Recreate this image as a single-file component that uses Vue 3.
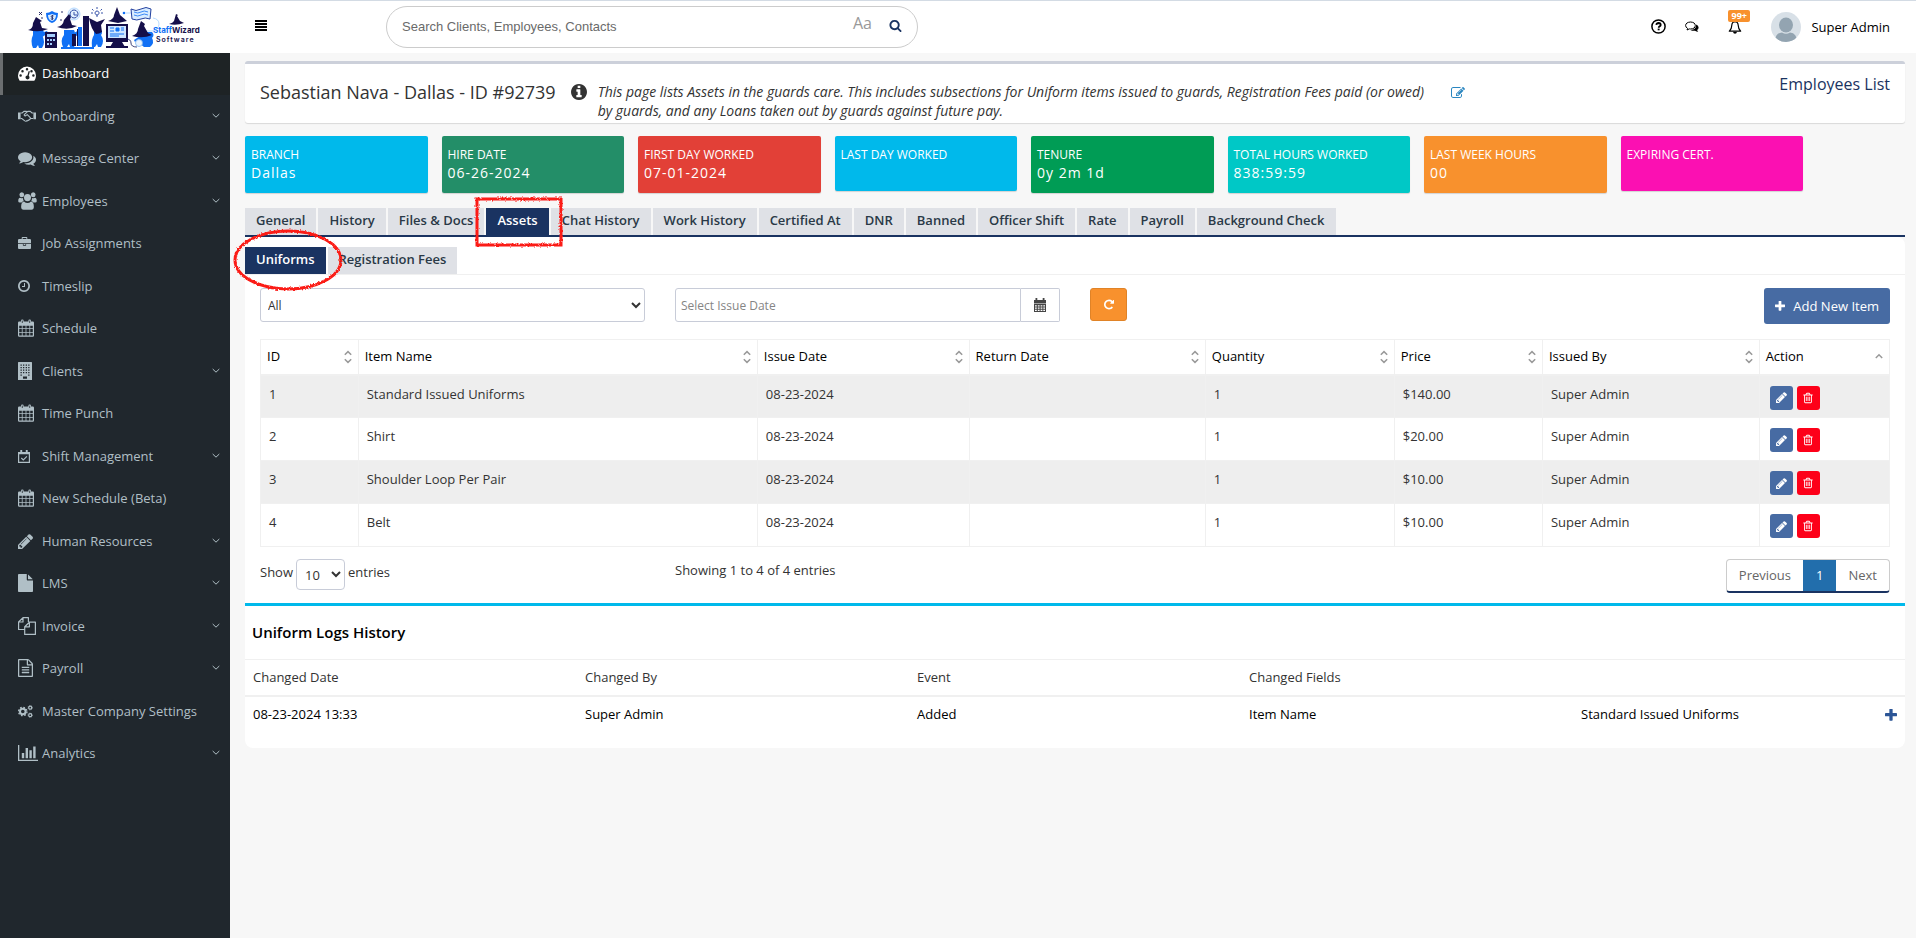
<script setup>
import { ref } from 'vue'

const icons = {
  bars: { vb: '0 0 12 11', b: '<path d="M0 0h12v2H0zM0 3h12v2H0zM0 6h12v2H0zM0 9h12v2H0z"/>' },
  search: { vb: '0 0 1792 1792', b: '<path d="M1216 832q0-185-131.5-316.5t-316.5-131.5-316.5 131.5-131.5 316.5 131.5 316.5 316.5 131.5 316.5-131.5 131.5-316.5zm512 832q0 52-38 90t-90 38q-54 0-90-38l-343-342q-179 124-399 124-143 0-273.5-55.5t-225-150-150-225-55.5-273.5 55.5-273.5 150-225 225-150 273.5-55.5 273.5 55.5 225 150 150 225 55.5 273.5q0 220-124 399l343 343q37 37 37 90z"/>' },
  plus: { vb: '192 160 1408 1408', b: '<path d="M1600 736v192q0 40-28 68t-68 28h-416v416q0 40-28 68t-68 28h-192q-40 0-68-28t-28-68v-416h-416q-40 0-68-28t-28-68v-192q0-40 28-68t68-28h416v-416q0-40 28-68t68-28h192q40 0 68 28t28 68v416h416q40 0 68 28t28 68z"/>' },
  trash: { vb: '0 0 1792 1792', b: '<path d="M704 736v576q0 14-9 23t-23 9h-64q-14 0-23-9t-9-23v-576q0-14 9-23t23-9h64q14 0 23 9t9 23zm256 0v576q0 14-9 23t-23 9h-64q-14 0-23-9t-9-23v-576q0-14 9-23t23-9h64q14 0 23 9t9 23zm256 0v576q0 14-9 23t-23 9h-64q-14 0-23-9t-9-23v-576q0-14 9-23t23-9h64q14 0 23 9t9 23zm128 724v-948h-896v948q0 22 7 40.5t14.5 27 10.5 8.5h832q3 0 10.5-8.5t14.5-27 7-40.5zm-672-1076h448l-48-117q-7-9-17-11h-317q-10 2-17 11zm928 32v64q0 14-9 23t-23 9h-96v948q0 83-47 143.5t-113 60.5h-832q-66 0-113-58.5t-47-141.5v-952h-96q-14 0-23-9t-9-23v-64q0-14 9-23t23-9h309l70-167q15-37 54-63t79-26h320q40 0 79 26t54 63l70 167h309q14 0 23 9t9 23z"/>' },
  pencil: { vb: '128 128 1520 1536', b: '<path d="M491 1536l91-91-235-235-91 91v107h128v128h107zm523-928q0-22-22-22-10 0-17 7l-542 542q-7 7-7 17 0 22 22 22 10 0 17-7l542-542q7-7 7-17zm-54-192l416 416-832 832h-416v-416zm683 96q0 53-37 90l-166 166-416-416 166-165q36-38 90-38 53 0 91 38l235 234q37 39 37 91z"/>' },
  briefcase: { vb: '0 0 1792 1536', b: '<path d="M640 256h512v-128h-512v128zm1152 640v480q0 66-47 113t-113 47h-1472q-66 0-113-47t-47-113v-480h672v160q0 26 19 45t45 19h320q26 0 45-19t19-45v-160h672zm-768 0v128h-256v-128h256zm768-480v384h-1792v-384q0-66 47-113t113-47h352v-160q0-40 28-68t68-28h576q40 0 68 28t28 68v160h352q66 0 113 47t47 113z"/>' },
  file: { vb: '128 0 1536 1792', b: '<path d="M1152 512v-472q22 14 36 28l408 408q14 14 28 36h-472zm-128 32q0 40 28 68t68 28h544v1056q0 40-28 68t-68 28h-1344q-40 0-68-28t-28-68v-1600q0-40 28-68t68-28h800v544z"/>' },
  fileText: { vb: '128 0 1536 1792', b: '<path d="M1596 380q28 28 48 76t20 88v1152q0 40-28 68t-68 28h-1344q-40 0-68-28t-28-68v-1600q0-40 28-68t68-28h896q40 0 88 20t76 48zm-444-244v376h376q-10-29-22-41l-313-313q-12-12-41-22zm384 1528v-1024h-416q-40 0-68-28t-28-68v-416h-768v1536h1280zm-1024-864q0-14 9-23t23-9h704q14 0 23 9t9 23v64q0 14-9 23t-23 9h-704q-14 0-23-9t-9-23v-64zm736 224q14 0 23 9t9 23v64q0 14-9 23t-23 9h-704q-14 0-23-9t-9-23v-64q0-14 9-23t23-9h704zm0 256q14 0 23 9t9 23v64q0 14-9 23t-23 9h-704q-14 0-23-9t-9-23v-64q0-14 9-23t23-9h704z"/>' },
  clock: { vb: '128 128 1536 1536', b: '<path d="M1024 544v448q0 14-9 23t-23 9h-320q-14 0-23-9t-9-23v-64q0-14 9-23t23-9h224v-352q0-14 9-23t23-9h64q14 0 23 9t9 23zm416 352q0-148-73-273t-198-198-273-73-273 73-198 198-73 273 73 273 198 198 273 73 273-73 198-198 73-273zm224 0q0 209-103 385.5t-279.5 279.5-385.5 103-385.5-103-279.5-279.5-103-385.5 103-385.5 279.5-279.5 385.5-103 385.5 103 279.5 279.5 103 385.5z"/>' },
  info: { vb: '128 128 1536 1536', b: '<path d="M1152 1376v-160q0-14-9-23t-23-9h-96v-512q0-14-9-23t-23-9h-320q-14 0-23 9t-9 23v160q0 14 9 23t23 9h96v320h-96q-14 0-23 9t-9 23v160q0 14 9 23t23 9h448q14 0 23-9t9-23zm-128-896v-160q0-14-9-23t-23-9h-192q-14 0-23 9t-9 23v160q0 14 9 23t23 9h192q14 0 23-9t9-23zm640 416q0 209-103 385.5t-279.5 279.5-385.5 103-385.5-103-279.5-279.5-103-385.5 103-385.5 279.5-279.5 385.5-103 385.5 103 279.5 279.5 103 385.5z"/>' },
  repeat: { vb: '128 128 1536 1536', b: '<path d="M1664 256v448q0 26-19 45t-45 19h-448q-42 0-59-40-17-39 14-69l138-138q-148-137-349-137-104 0-198.5 40.5t-163.5 109.5-109.5 163.5-40.5 198.5 40.5 198.5 109.5 163.5 163.5 109.5 198.5 40.5q119 0 225-52t179-147q7-10 23-12 15 0 25 9l137 138q9 8 9.5 20.5t-7.5 22.5q-109 132-264 204.5t-327 72.5q-156 0-298-61t-245-164-164-245-61-298 61-298 164-245 245-164 298-61q147 0 284.5 55.5t244.5 156.5l130-129q29-31 70-14 39 17 39 59z"/>' },
  comments: { vb: '0 128 1792 1536', b: '<path d="M1408 768q0 139-94 257t-256.5 186.5-353.5 68.5q-86 0-176-16-124 88-278 128-36 9-86 16h-3q-11 0-20.5-8t-11.5-21q-1-3-1-6.5t.5-6.5 2-6l2.5-5 3.5-5.5 4-5 4.5-5 4-4.5q5-6 23-25t26-29.5 22.5-29 25-38.5 20.5-44q-124-72-195-177t-71-224q0-139 94-257t256.5-186.5 353.5-68.5 353.5 68.5 256.5 186.5 94 257zm384 256q0 120-71 224.5t-195 176.5q10 24 20.5 44t25 38.5 22.5 29 26 29.5 23 25q1 1 4 4.5t4.5 5 4 5 3.5 5.5l2.5 5 2 6 .5 6.5-1 6.5q-3 14-13 22t-22 7q-50-7-86-16-154-40-278-128-90 16-176 16-271 0-472-132 58 4 88 4 161 0 309-45t264-129q125-92 192-212t67-254q0-77-23-152 129 71 204 178t75 230z"/>' },
  edit: { vb: '0 128 1792 1408', b: '<path d="M888 1184l116-116-152-152-116 116v56h96v96h56zm440-720q-16-16-33 1l-350 350q-17 17-1 33t33-1l350-350q17-17 1-33zm80 594v190q0 119-84.5 203.5t-203.5 84.5h-832q-119 0-203.5-84.5t-84.5-203.5v-832q0-119 84.5-203.5t203.5-84.5h832q63 0 117 25 15 7 18 23 3 17-9 29l-49 49q-14 14-32 8-23-6-45-6h-832q-66 0-113 47t-47 113v832q0 66 47 113t113 47h832q66 0 113-47t47-113v-126q0-13 9-22l64-64q15-15 35-7t20 29zm-96-738l288 288-672 672h-288v-288zm444 132l-92 92-288-288 92-92q28-28 68-28t68 28l152 152q28 28 28 68t-28 68z"/>' },
  tachometer: { vb: '0 0 18 15', b: '<path fill-rule="evenodd" d="M9 0.5A9 9 0 0 1 18 9.5c0 1.8-.5 3.4-1.4 4.8q-.2.5-.8.5H2.200q-.6 0-.8-.5A8.700 8.700 0 0 1 0 9.500 9 9 0 0 1 9 .5zM2.600 8.300a1.200 1.200 0 1 0 0 2.500 1.200 1.200 0 0 0 0-2.500zM4.500 4a1.200 1.200 0 1 0 0 2.500 1.200 1.200 0 0 0 0-2.500zM9 2.100a1.200 1.200 0 1 0 0 2.500 1.200 1.200 0 0 0 0-2.500zM13.500 4a1.200 1.200 0 1 0 0 2.500 1.200 1.200 0 0 0 0-2.500zM15.400 8.300a1.200 1.200 0 1 0 0 2.500 1.200 1.200 0 0 0 0-2.500zM10.500 5.500L9.400 9.400a2 2 0 1 0 1.300.4l1-3.900q.1-.6-.5-.8t-.7.400z"/>' },
  handshake: { vb: '0 0 18 12', b: '<path d="M0 2.500h2.600v6.800H0zM15.400 2.500H18v6.800h-2.600z"/><path d="M2.600 3h1.600L6 1.400h2.300L9 2l.9-.6h2.300L14 3h1.400M2.600 8.500h1.200l3 2.400q1 .7 1.700-.1 1 .4 1.500-.5 1.200.2 1.400-.9 1 .1 1.200-.9h2.600M9.200 1.900L6.300 4.500q-.3 1.300 1 1.400l2-1.300 3.400 3.500" fill="none" stroke="currentColor" stroke-width="1.100"/>' },
  users: { vb: '0 0 20 18', b: '<circle cx="4" cy="2.800" r="2.500"/><circle cx="16" cy="2.800" r="2.500"/><circle cx="10" cy="5.600" r="3.700"/><path d="M5.300 6.100Q4.200 6.300 3 6Q1.500 5.600 1 6.300Q0 7.500.3 9.500q.2 1 1.500 1h2q1-1.200 2.200-1.500-.9-1.400-.7-2.900zM14.700 6.100q1.100.2 2.300-.1 1.500-.4 2 .3 1 1.200.7 3.200-.2 1-1.500 1h-2q-1-1.200-2.200-1.500.9-1.400.7-2.900zM6.300 9.500Q10 12.500 13.700 9.500q2.900.3 3 5.300 0 3-2.600 3H5.900q-2.600 0-2.600-3 .1-5 3-5.300z"/>' },
  calendar: { vb: '0 0 16 18', b: '<path fill-rule="evenodd" d="M1.200 2.600h13.600q1.200 0 1.200 1.200v12.800q0 1.200-1.200 1.200H1.200Q0 17.800 0 16.600V3.800Q0 2.600 1.200 2.600zM1.200 6.800v2.500h2.600V6.800zM4.600 6.800v2.500h3V6.800zM8.400 6.800v2.500h3V6.800zM12.200 6.800v2.500h2.600V6.800zM1.200 10.100v2.800h2.600v-2.800zM4.600 10.100v2.800h3v-2.800zM8.400 10.100v2.800h3v-2.800zM12.200 10.100v2.800h2.600v-2.800zM1.200 13.700v2.900h2.600v-2.900zM4.600 13.700v2.900h3v-2.900zM8.400 13.700v2.900h3v-2.900zM12.200 13.700v2.900h2.600v-2.900z"/><rect x="3" y=".5" width="2.600" height="4.500" rx="1.200"/><rect x="10.400" y=".5" width="2.600" height="4.500" rx="1.200"/><path d="M4.300 1.600v2.400M11.700 1.600v2.400" stroke="#20272d" stroke-width=".8"/>' },
  calendarDark: { vb: '0 0 12 14', b: '<path fill-rule="evenodd" d="M0 2h12v3H0zM0 5.500h12V14H0zM1 7.200v1.300h1.800V7.200zM3.800 7.200v1.300h1.800V7.200zM6.600 7.200v1.300h1.800V7.200zM9.300 7.200v1.300H11V7.200zM1 9.500v1.300h1.800V9.500zM3.800 9.500v1.300h1.800V9.500zM6.600 9.500v1.300h1.800V9.500zM9.300 9.500v1.300H11V9.500zM1 11.700v1.300h1.800v-1.300zM3.800 11.700v1.300h1.800v-1.300zM6.600 11.700v1.300h1.800v-1.300zM9.300 11.700v1.300H11v-1.300z"/><path d="M1.500 0h1.800v3H1.500zM8.700 0h1.800v3H8.700z"/>' },
  building: { vb: '0 0 14 18', b: '<path fill-rule="evenodd" d="M.6 0h12.800q.6 0 .6.600V18H0V.6Q0 0 .6 0zM2.500 2.500v1.200h1.300V2.500zM5 2.500v1.200h1.300V2.500zM7.700 2.500v1.200H9V2.500zM10.200 2.500v1.200h1.300V2.500zM2.500 5v1.200h1.300V5zM5 5v1.200h1.300V5zM7.700 5v1.200H9V5zM10.200 5v1.200h1.300V5zM2.500 7.500v1.200h1.300V7.500zM5 7.500v1.200h1.300V7.500zM7.700 7.500v1.200H9V7.500zM10.200 7.500v1.200h1.300V7.500zM2.500 10v1.200h1.300V10zM5 10v1.200h1.300V10zM7.700 10v1.200H9V10zM10.200 10v1.200h1.300V10zM2.500 12.500v1.200h1.300v-1.200zM10.200 12.500v1.200h1.300v-1.200zM5 14.500v2.300h4v-2.300z"/>' },
  calendarCheck: { vb: '0 0 12 13', b: '<path d="M.6 2.500h10.800v9.900H.6z" fill="none" stroke="currentColor" stroke-width="1.200"/><path d="M.6 2.200h10.800v2.100H.6zM2.300 0h1.900v3.300H2.300zM7.800 0h1.900v3.300H7.800z"/><path d="M3.300 8l2 2 3.600-3.600" fill="none" stroke="currentColor" stroke-width="1.100"/>' },
  copy: { vb: '0 0 18 18', b: '<path d="M6.500 12.500H.6V5L5 .6h5.400v4.500M5 .6V5H.6M6.700 9.800L11.400 5.200h6v12.200H6.700zM11.400 5.200v4.600H6.700" fill="none" stroke="currentColor" stroke-width="1.200" stroke-linejoin="round"/>' },
  cogs: { vb: '0 0 15 13', b: '<g fill="none" stroke="currentColor"><circle cx="4.800" cy="6.500" r="2.800" stroke-width="2"/><circle cx="4.800" cy="6.500" r="4.200" stroke-width="1.300" stroke-dasharray="1.700 1.600"/><circle cx="12.200" cy="2.700" r="1.500" stroke-width="1.200"/><circle cx="12.200" cy="2.700" r="2.200" stroke-width=".7" stroke-dasharray=".9 .8"/><circle cx="12.200" cy="10.200" r="1.500" stroke-width="1.200"/><circle cx="12.200" cy="10.200" r="2.200" stroke-width=".7" stroke-dasharray=".9 .8"/></g>' },
  chart: { vb: '0 0 20 16', b: '<path d="M0 0h1.300v14.700H20V16H0zM3.800 8h2.400v5.300H3.800zM7.600 3h2.400v10.300H7.600zM11.400 5.200h2.400v8.100h-2.400zM15.200 1.600h2.400v11.700h-2.400z"/>' },
  chevron: { vb: '0 0 8 6', b: '<path d="M.7 1l3.300 3.200L7.300 1" fill="none" stroke="currentColor" stroke-width="1"/>' },
  help: { vb: '0 0 15 15', b: '<circle cx="7.500" cy="7.500" r="6.600" fill="none" stroke="currentColor" stroke-width="1.500"/><path d="M5.300 5.900Q5.600 4 7.600 4q2.100.1 2.100 1.900 0 .9-1.100 1.500-.9.500-.9 1.300" fill="none" stroke="currentColor" stroke-width="1.800"/><path d="M6.700 9.600h1.900v1.700H6.700z"/>' },
  commentsO: { vb: '0 0 14 12', b: '<path d="M5.500 1q4.700.3 4.800 3.500-.1 3.300-4.800 3.500l-1.200-.1L2 9l.6-1.600Q.6 6.400.6 4.500.8 1.300 5.500 1z" fill="none" stroke="currentColor" stroke-width="1"/><path d="M11.200 3.500q2.300 1 2.400 2.900 0 1.700-1.500 2.700.4 1 1.200 1.700-2-.1-3.300-1.100-2.700.3-4.500-.8 5.700.2 5.700-5.400z"/>' },
  bell: { vb: '0 0 14 14', b: '<path d="M7 1.600q3 .2 3.200 3.600.1 3.900 2.500 6H1.300q2.400-2.100 2.500-6Q4 1.800 7 1.600z" fill="none" stroke="currentColor" stroke-width="1.200" stroke-linejoin="round"/><path d="M6.300 0h1.400v2H6.300zM5 11.800h4q-.3 2-2 2t-2-2z"/>' }
}

const menu = [
  { label: 'Dashboard', icon: 'tachometer', w: 18, h: 15, active: true },
  { label: 'Onboarding', icon: 'handshake', w: 18, h: 12, sub: true },
  { label: 'Message Center', icon: 'comments', w: 18, h: 15, sub: true },
  { label: 'Employees', icon: 'users', w: 19, h: 18, sub: true },
  { label: 'Job Assignments', icon: 'briefcase', w: 13, h: 12 },
  { label: 'Timeslip', icon: 'clock', w: 12, h: 12 },
  { label: 'Schedule', icon: 'calendar', w: 16, h: 18 },
  { label: 'Clients', icon: 'building', w: 14, h: 18, sub: true },
  { label: 'Time Punch', icon: 'calendar', w: 16, h: 18 },
  { label: 'Shift Management', icon: 'calendarCheck', w: 12, h: 13, sub: true },
  { label: 'New Schedule (Beta)', icon: 'calendar', w: 16, h: 18 },
  { label: 'Human Resources', icon: 'pencil', w: 15, h: 15, sub: true },
  { label: 'LMS', icon: 'file', w: 15, h: 18, sub: true },
  { label: 'Invoice', icon: 'copy', w: 18, h: 18, sub: true },
  { label: 'Payroll', icon: 'fileText', w: 15, h: 18, sub: true },
  { label: 'Master Company Settings', icon: 'cogs', w: 15, h: 13 },
  { label: 'Analytics', icon: 'chart', w: 20, h: 16, sub: true }
]

const stats = [
  { label: 'BRANCH', value: 'Dallas', tone: 'cyan' },
  { label: 'HIRE DATE', value: '06-26-2024', tone: 'forest' },
  { label: 'FIRST DAY WORKED', value: '07-01-2024', tone: 'red' },
  { label: 'LAST DAY WORKED', value: '', tone: 'cyan' },
  { label: 'TENURE', value: '0y 2m 1d', tone: 'green' },
  { label: 'TOTAL HOURS WORKED', value: '838:59:59', tone: 'teal' },
  { label: 'LAST WEEK HOURS', value: '00', tone: 'orange' },
  { label: 'EXPIRING CERT.', value: '', tone: 'pink' }
]

const tabs = ['General', 'History', 'Files & Docs', 'Assets', 'Chat History', 'Work History', 'Certified At', 'DNR', 'Banned', 'Officer Shift', 'Rate', 'Payroll', 'Background Check']
const subTabs = ['Uniforms', 'Registration Fees']
const columns = ['ID', 'Item Name', 'Issue Date', 'Return Date', 'Quantity', 'Price', 'Issued By', 'Action']
const items = [
  ['1', 'Standard Issued Uniforms', '08-23-2024', '', '1', '$140.00', 'Super Admin'],
  ['2', 'Shirt', '08-23-2024', '', '1', '$20.00', 'Super Admin'],
  ['3', 'Shoulder Loop Per Pair', '08-23-2024', '', '1', '$10.00', 'Super Admin'],
  ['4', 'Belt', '08-23-2024', '', '1', '$10.00', 'Super Admin']
]

const activeTab = ref('Assets')
const activeSub = ref('Uniforms')
</script>

<template>
  <div class="page">
    <header class="topbar">
      <a class="brand" href="#" aria-label="StaffWizard Software">
        <svg width="180" height="44" viewBox="0 0 180 44">
          <g fill="none" stroke="#b8dcff" stroke-width="1">
            <path d="M101 7h8M128 12q6 1 6 6t-7 7h-10" />
            <circle cx="49" cy="8" r="6" fill="#e3f1ff" />
          </g>
          <g id="wizards">
            <g fill="#1170f5">
              <path d="M8 24h10q2 3-1 5 4 7 0 13h-3l-1-3-2 3H8q-3-7 0-13zM13 28l9-3 1 2-7 5z" />
              <path d="M39 24h10q2 3-1 5 5 7 1 12h-4l-1-3-2 3h-4q-3-7 1-12zM47 28l9-5 1 2-8 7z" />
              <path d="M69 24h7q2 3 0 5 4 6 0 12h-3l-1-3-2 3h-3q-1-8 2-12z" />
              <path d="M116 26h11q3 3 0 6 3 5-2 9h-6q-4-3-5-8l-4 3-1-2 6-4z" />
              <path d="M27 5q-3 2-6 2 0 8 6 10 6-2 6-10-3 0-6-2z" />
            </g>
            <path d="M27 8q-2 1-4 1 0 5 4 6 4-1 4-6-2 0-4-1z" fill="#d9ecff" />
            <path d="M28.500 10q-2-1-2.300.4 0 1 1.300 1.200 1.300.5 0 1.500-1 .2-1.700-.4M27.300 9v5" fill="none" stroke="#12185a" stroke-width=".8" />
            <g fill="#150f4a">
              <path d="M3 24q5-1 5-7l3-6 6 4-2 1 2 6 6 1q-9 4-20 1z" />
              <path d="M32 21q6-1 7-7l5-6 2 3-1 2 2 6 5 1q-9 5-20 1z" />
              <path d="M64 12l8 4 8-3-4 6 1 7q-3 2-6 2-5-5-7-16z" />
              <path d="M83 15q6-2 6-6l3-8 3 8 7 6-9 2z" />
              <path d="M107 30q6-2 6-7l3-8 4 3-1 2 4 7 4 2q-9 4-20 1z" />
              <path d="M58 10h6v30h-6zM52 23h2v17h-2zM47 28h4v12h-4z" />
              <path d="M81 18h22v18H81zM88 36h9l3 5H85zM81 40h22v2H81z" />
              <path d="M20 26h12v16H20z" />
            </g>
            <path d="M83 20h18v12H83z" fill="#cfe6ff" />
            <path d="M22 28h8v3h-8zM22 33h2v2h-2zM25 33h2v2h-2zM28 33h2v2h-2zM22 37h2v2h-2zM25 37h2v2h-2z" fill="#a5d0ff" />
            <path d="M85 22h4M85 25h4M85 28h14M85 30h9M96 22h3M96 24h3M91 22h3v3h-3z" fill="#1170f5" stroke="#1170f5" stroke-width="1" />
            <path d="M36 41h33v2H36zM53 21h4v19h-4z" fill="#1170f5" />
            <path d="M106 3q5 3 10 0t10 0l-1 10q-5-2-9 0t-9 0z" fill="#d9ecff" stroke="#23419f" stroke-width="1" />
            <path d="M109 6q4 2 7 0t7 0M109 9q4 2 7 0t7 0" fill="none" stroke="#1170f5" stroke-width=".8" />
            <path d="M49 4a4 4 0 1 0 .1 0zM49 6v3h3M72 5a2 2 0 1 0 .1 0M72 1v2M67 3l1.500 1.500M77 3l-1.500 1.500M66 7h2M76 7h2M71 10h2" fill="none" stroke="#23419f" stroke-width=".9" />
            <circle cx="99" cy="7" r="1.300" fill="#1170f5" />
            <path d="M101 33q5 0 5 4t6 4" fill="none" stroke="#12185a" stroke-width=".8" />
            <circle cx="114" cy="37" r="3.500" fill="#e8f3ff" stroke="#7fb4ee" stroke-width=".8" />
            <path d="M14 6l3 3M17 6l-3 3M16 12h2M36 6h2M35 14h2" stroke="#12185a" stroke-width=".9" />
            <path d="M144 18q4-1 5-3l2-7 2 1-1 1 3 5 4 2q-8 3-15 1z" fill="#150f4a" />
          </g>
          <text x="128" y="27" class="logo-name"><tspan fill="#1170f5">Staff</tspan><tspan fill="#150f4a">Wizard</tspan></text>
          <text x="131" y="36" class="logo-sub">Software</text>
        </svg>
      </a>
      <button class="bare menu-btn" aria-label="Toggle menu">
        <svg width="12" height="11" :viewBox="icons.bars.vb" v-html="icons.bars.b" />
      </button>
      <form class="search" @submit.prevent>
        <input type="text" placeholder="Search Clients, Employees, Contacts" aria-label="Search" />
        <button class="bare case" type="button">Aa</button>
        <button class="bare find" aria-label="Find">
          <svg width="13" height="13" :viewBox="icons.search.vb" v-html="icons.search.b" />
        </button>
      </form>
      <div class="top-actions">
        <button class="bare help" aria-label="Help"><svg width="15" height="15" :viewBox="icons.help.vb" v-html="icons.help.b" /></button>
        <button class="bare chat" aria-label="Messages"><svg width="14" height="12" :viewBox="icons.commentsO.vb" v-html="icons.commentsO.b" /></button>
        <button class="bare bell" aria-label="Notifications">
          <svg width="14" height="14" :viewBox="icons.bell.vb" v-html="icons.bell.b" />
          <span class="badge">99+</span>
        </button>
        <a class="user" href="#">
          <svg width="30" height="30" viewBox="0 0 30 30">
            <defs><clipPath id="face"><circle cx="15" cy="15" r="15" /></clipPath></defs>
            <g clip-path="url(#face)">
              <path d="M0 0h30v30H0z" fill="#d8e0e7" />
              <ellipse cx="15" cy="13" rx="7" ry="7.500" fill="#93a4b1" />
              <path d="M4 30q0-9 7-9.500 4 2.500 8 0 7 .5 7 9.500z" fill="#93a4b1" />
            </g>
          </svg>
          Super Admin
        </a>
      </div>
    </header>

    <nav class="sidebar">
      <a v-for="m in menu" :key="m.label" href="#" class="nav-item" :class="{ active: m.active }">
        <span class="nav-icon"><svg :width="m.w" :height="m.h" :viewBox="icons[m.icon].vb" preserveAspectRatio="none" v-html="icons[m.icon].b" /></span>
        <span class="nav-label">{{ m.label }}</span>
        <svg v-if="m.sub" width="8" height="6" :viewBox="icons.chevron.vb" v-html="icons.chevron.b" />
      </a>
    </nav>

    <main class="content">
      <section class="title-card">
        <h1>Sebastian Nava - Dallas - ID #92739</h1>
        <svg class="info" width="16" height="16" :viewBox="icons.info.vb" v-html="icons.info.b" />
        <p>This page lists Assets in the guards care. This includes subsections for Uniform items issued to guards, Registration Fees paid (or owed) by guards, and any Loans taken out by guards against future pay.</p>
        <button class="bare edit-note" aria-label="Edit description"><svg width="14" height="11" :viewBox="icons.edit.vb" v-html="icons.edit.b" /></button>
        <a class="list-link" href="#">Employees List</a>
      </section>

      <section class="stats">
        <div v-for="s in stats" :key="s.label" class="stat" :class="s.tone">
          <span class="stat-label">{{ s.label }}</span>
          <span v-if="s.value" class="stat-value">{{ s.value }}</span>
        </div>
      </section>

      <div class="tabs main-tabs">
        <button v-for="t in tabs" :key="t" class="tab" :class="{ on: t === activeTab }" @click="activeTab = t">
          {{ t }}
          <svg v-if="t === 'Assets'" class="mark box-mark" width="90" height="52" viewBox="0 0 90 52">
            <defs>
              <filter id="chalk" x="-5%" y="-5%" width="110%" height="110%">
                <feTurbulence type="fractalNoise" baseFrequency="0.6" numOctaves="2" seed="3" />
                <feDisplacementMap in="SourceGraphic" scale="3" xChannelSelector="R" yChannelSelector="G" />
              </filter>
            </defs>
            <rect x="3" y="3" width="84" height="46" filter="url(#chalk)" />
          </svg>
        </button>
      </div>

      <section class="panel">
        <div class="tabs sub-tabs">
          <button v-for="t in subTabs" :key="t" class="tab" :class="{ on: t === activeSub }" @click="activeSub = t">
            {{ t }}
            <svg v-if="t === 'Uniforms'" class="mark ring-mark" width="112" height="66" viewBox="0 0 112 66">
              <ellipse cx="56" cy="33" rx="53" ry="29" filter="url(#chalk)" />
            </svg>
          </button>
        </div>

        <div class="filters">
          <select class="field type" aria-label="Item type"><option>All</option></select>
          <div class="date">
            <input class="field" type="text" placeholder="Select Issue Date" aria-label="Issue date" />
            <button class="addon" aria-label="Open calendar"><svg width="12" height="14" :viewBox="icons.calendarDark.vb" v-html="icons.calendarDark.b" /></button>
          </div>
          <button class="reset" aria-label="Reset"><svg width="10" height="11" :viewBox="icons.repeat.vb" v-html="icons.repeat.b" /></button>
          <button class="add"><svg width="10" height="10" :viewBox="icons.plus.vb" v-html="icons.plus.b" />Add New Item</button>
        </div>

        <table class="items">
          <thead>
            <tr>
              <th v-for="(c, i) in columns" :key="c">
                <div class="th">
                  {{ c }}
                  <svg width="8" height="14" viewBox="0 0 8 14">
                    <path :d="i < 7 ? 'M.8 4.800L4 1.600l3.200 3.200M.8 9.200L4 12.400l3.200-3.200' : 'M.8 8L4 4.800L7.200 8'" />
                  </svg>
                </div>
              </th>
            </tr>
          </thead>
          <tbody>
            <tr v-for="row in items" :key="row[0]">
              <td v-for="(v, i) in row" :key="i">{{ v }}</td>
              <td class="act">
                <div class="row-actions">
                  <button class="mini blue" aria-label="Edit"><svg width="11" height="11" :viewBox="icons.pencil.vb" v-html="icons.pencil.b" /></button>
                  <button class="mini rose" aria-label="Delete"><svg width="12" height="12" :viewBox="icons.trash.vb" v-html="icons.trash.b" /></button>
                </div>
              </td>
            </tr>
          </tbody>
        </table>

        <div class="table-foot">
          <label class="length">Show
            <select><option>10</option></select>
            entries</label>
          <span class="summary">Showing 1 to 4 of 4 entries</span>
          <div class="pager">
            <button>Previous</button>
            <button class="current">1</button>
            <button>Next</button>
          </div>
        </div>

        <div class="logs">
          <h2>Uniform Logs History</h2>
          <table>
            <thead>
              <tr><th>Changed Date</th><th>Changed By</th><th>Event</th><th>Changed Fields</th><th></th></tr>
            </thead>
            <tbody>
              <tr>
                <td>08-23-2024 13:33</td>
                <td>Super Admin</td>
                <td>Added</td>
                <td>Item Name</td>
                <td>
                  <div class="last">Standard Issued Uniforms
                    <button class="bare more" aria-label="Show more"><svg width="12" height="12" :viewBox="icons.plus.vb" v-html="icons.plus.b" /></button>
                  </div>
                </td>
              </tr>
            </tbody>
          </table>
        </div>
      </section>
    </main>
  </div>
</template>

<style>
body {
  background: #f7f7f7;
}
</style>

<style scoped>
.page {
  display: grid;
  grid-template-columns: 230px 1fr;
  grid-template-rows: 53px 1fr;
  min-height: 100vh;
  font: 13px/19px "Open Sans", "Noto Sans", sans-serif;
  color: #333;
}
.page *,
.page *::before {
  box-sizing: border-box;
}
svg {
  display: block;
  flex: none;
  fill: currentColor;
}
button,
input,
select {
  font: inherit;
  color: inherit;
}
button {
  cursor: pointer;
}
a {
  text-decoration: none;
  color: inherit;
}
.bare {
  border: 0;
  background: none;
  padding: 0;
}

.topbar {
  grid-column: 1 / -1;
  display: flex;
  align-items: center;
  background: #fff;
  border-top: 1px solid #d3dbe4;
  color: #000;
}
.brand {
  width: 255px;
  padding: 2px 0 0 25px;
}
.logo-name {
  font: 700 8px Inter, sans-serif;
}
.logo-sub {
  font: 600 7px Inter, sans-serif;
  letter-spacing: 1px;
  fill: #150f4a;
}
.menu-btn {
  width: 131px;
  margin-bottom: 4px;
}
.search {
  display: flex;
  align-items: center;
  width: 532px;
  height: 42px;
  padding: 0 15px;
  border: 1px solid #ccc;
  border-radius: 21px;
}
.search input {
  flex: 1;
  min-width: 0;
  padding: 0;
  border: 0;
  outline: 0;
  background: none;
  font: 13px/20px "Liberation Sans", Arial, sans-serif;
}
.search input::placeholder {
  color: #6a6a6a;
  opacity: 1;
}
.case {
  margin: 0 17px 8px 0;
  font-size: 16px;
  color: #999;
}
.find {
  margin-bottom: 4px;
  color: #1a3361;
}
.top-actions {
  display: flex;
  align-items: center;
  margin-left: auto;
  padding-right: 26px;
}
.help {
  margin-bottom: 2px;
}
.chat {
  margin-left: 19px;
}
.bell {
  position: relative;
  margin: 0 29px;
}
.badge {
  position: absolute;
  left: 0;
  top: -10px;
  padding: 0 3px;
  border-radius: 2px;
  background: #f8912d;
  color: #fff;
  font: 700 9px/12px "Open Sans", sans-serif;
}
.user {
  display: flex;
  align-items: center;
  gap: 10px;
}

.sidebar {
  background: #20272d;
  color: #b0bfc6;
}
.nav-item {
  display: flex;
  align-items: center;
  height: 42px;
  padding: 0 10px 2px 15px;
  border-left: 3px solid transparent;
}
.nav-item:nth-child(odd) {
  margin-bottom: 1px;
}
.nav-item.active {
  background: #1e2325;
  border-left-color: #6b6e70;
  color: #fff;
}
.nav-icon {
  width: 24px;
}
.nav-label {
  flex: 1;
}

.content {
  padding: 8px 11px 0 15px;
}
.title-card {
  display: flex;
  align-items: flex-start;
  height: 62px;
  padding: 0 15px;
  background: #fff;
  border-top: 3px solid #ccd0da;
  border-radius: 3px;
  box-shadow: 0 1px 1px rgba(0, 0, 0, 0.12);
}
.title-card h1 {
  margin: 16px 15px 0 0;
  font-weight: 400;
  font-size: 18px;
  line-height: 24px;
}
.info {
  margin: 20px 11px 0 0;
}
.title-card p {
  width: 830px;
  margin: 18px 0 0;
  font-size: 14px;
  font-style: italic;
}
.edit-note {
  margin: 23px 0 0 23px;
  color: #2a86c0;
}
.list-link {
  margin: 8px 0 0 auto;
  font-size: 16px;
  line-height: 24px;
  color: #1a3361;
}

.stats {
  display: grid;
  grid-template-columns: repeat(8, 1fr);
  gap: 14px;
  align-items: start;
  height: 72px;
  margin-top: 13px;
  padding-right: 102px;
}
.stat {
  display: flex;
  flex-direction: column;
  min-height: 55px;
  padding: 9px 6px 11px;
  border-radius: 2px;
  box-shadow: 0 1px 1px rgba(0, 0, 0, 0.15);
  color: #fff;
}
.stat-label {
  font-size: 12px;
  white-space: nowrap;
}
.stat-value {
  font-size: 14px;
  line-height: 18px;
  font-weight: 500;
  letter-spacing: 1px;
}
.cyan { background: #00b9eb; }
.forest { background: #238e68; }
.red { background: #e24037; }
.green { background: #009c55; }
.teal { background: #00c8c6; }
.orange { background: #f8912d; }
.pink { background: #fb10b2; }

.tabs {
  display: flex;
  gap: 2px;
}
.main-tabs {
  border-bottom: 2px solid #1a3361;
}
.tab {
  position: relative;
  height: 27px;
  padding: 0 11px 2px;
  border: 0;
  background: #dfe1e6;
  color: #2a3947;
  font-weight: 600;
  white-space: nowrap;
}
.tab.on {
  background: #1a3361;
  color: #fff;
}
.mark {
  position: absolute;
  z-index: 2;
  pointer-events: none;
  fill: none;
  stroke: #fb1c18;
  stroke-width: 3;
}
.box-mark {
  left: -12px;
  top: -12px;
}
.ring-mark {
  left: -13px;
  top: -20px;
}

.panel {
  padding-top: 10px;
  background: #fff;
  border-radius: 0 8px 8px;
}
.sub-tabs {
  border-bottom: 1px solid #f0f0f0;
}
.filters {
  display: flex;
  align-items: flex-start;
  height: 64px;
  padding: 13px 15px 0;
}
.field {
  height: 34px;
  border: 1px solid #c8ccd8;
  border-radius: 3px;
  background: #fff;
  outline: 0;
  font-size: 12px;
}
.type {
  width: 385px;
  padding: 0 3px;
  margin-right: 30px;
}
.date {
  display: flex;
  width: 385px;
  margin-right: 30px;
}
.date .field {
  flex: 1;
  min-width: 0;
  padding: 0 5px;
  border-radius: 3px 0 0 3px;
}
.date .field::placeholder {
  color: #858585;
  opacity: 1;
}
.addon {
  display: grid;
  place-items: center;
  width: 39px;
  border: 1px solid #c8ccd8;
  border-left: 0;
  border-radius: 0 2px 2px 0;
  background: #fff;
  color: #444;
}
.reset {
  display: grid;
  place-items: center;
  width: 37px;
  height: 33px;
  border: 1px solid #e08327;
  border-radius: 3px;
  background: #f8912d;
  color: #fff;
}
.add {
  display: flex;
  align-items: center;
  gap: 8px;
  height: 36px;
  margin-left: auto;
  padding: 0 11px;
  border: 0;
  border-radius: 3px;
  background: #476ba3;
  color: #fff;
}

table {
  border-collapse: collapse;
  table-layout: fixed;
}
th {
  font-weight: 400;
  text-align: left;
}
.items {
  width: calc(100% - 30px);
  margin: 0 15px;
}
.items th,
.items td {
  border: 1px solid #f0f0f0;
}
.items th {
  height: 35px;
  padding: 0 6px;
  border-bottom-width: 2px;
  color: #000;
}
.items th:nth-child(1) { width: 6%; }
.items th:nth-child(2) { width: 24.5%; }
.items th:nth-child(3) { width: 13%; }
.items th:nth-child(4) { width: 14.5%; }
.items th:nth-child(5) { width: 11.6%; }
.items th:nth-child(6) { width: 9.1%; }
.items th:nth-child(7) { width: 13.3%; }
.th {
  display: flex;
  justify-content: space-between;
  align-items: center;
}
.th svg {
  fill: none;
  stroke: #999;
  stroke-width: 1.5;
}
.items td {
  height: 43px;
  padding: 9px 8px 0;
  vertical-align: top;
}
.items tr:nth-child(odd) td {
  background: #eee;
}
.items td.act {
  padding: 10px 10px 0;
}
.row-actions {
  display: flex;
  gap: 4px;
}
.mini {
  display: grid;
  place-items: center;
  width: 23px;
  height: 24px;
  padding: 0;
  border: 0;
  border-radius: 3px;
  color: #fff;
}
.blue { background: #476ba3; }
.rose { background: #fd0019; }

.table-foot {
  display: flex;
  align-items: flex-start;
  height: 56px;
  padding: 12px 15px 0;
}
.length {
  display: flex;
  gap: 3px;
  width: 415px;
  line-height: 27px;
}
.length select {
  width: 49px;
  height: 31px;
  padding: 0 4px;
  border: 1px solid #c8ccd8;
  border-radius: 4px;
  background: #fff;
}
.summary {
  padding-top: 2px;
}
.pager {
  display: flex;
  height: 34px;
  margin-left: auto;
  border: 1px solid #ccc;
  border-bottom: 2px solid #1a3361;
  border-radius: 4px;
}
.pager button {
  padding: 0 12px;
  border: 0;
  background: none;
  color: #666;
}
.pager .current {
  padding: 0 13px;
  background: #226eac;
  color: #fff;
}

.logs {
  min-height: 145px;
  border-top: 3px solid #00b9eb;
}
.logs h2 {
  margin: 0;
  padding: 0 7px;
  font-size: 15px;
  line-height: 53px;
  font-weight: 600;
  color: #000;
}
.logs table {
  width: 100%;
}
.logs th,
.logs td {
  padding: 8px;
}
.logs th {
  border-top: 1px solid #f0f0f0;
  border-bottom: 2px solid #f0f0f0;
}
.logs td {
  color: #000;
}
.last {
  display: flex;
  justify-content: space-between;
  align-items: center;
}
.more {
  color: #2c5596;
}
</style>
